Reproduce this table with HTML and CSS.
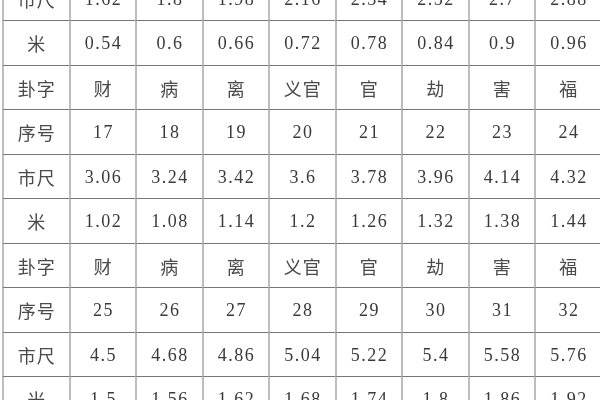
FILE: index.html
```html
<!DOCTYPE html>
<html lang="zh">
<head>
<meta charset="utf-8">
<link rel="stylesheet" href="styles.css">
</head>
<body>
<div class="sheet">
  <div class="grid">
    <div class="cell zh">市尺</div><div class="cell">1.62</div><div class="cell">1.8</div><div class="cell">1.98</div><div class="cell">2.16</div><div class="cell">2.34</div><div class="cell">2.52</div><div class="cell">2.7</div><div class="cell">2.88</div>
    <div class="cell zh">米</div><div class="cell">0.54</div><div class="cell">0.6</div><div class="cell">0.66</div><div class="cell">0.72</div><div class="cell">0.78</div><div class="cell">0.84</div><div class="cell">0.9</div><div class="cell">0.96</div>
    <div class="cell zh">卦字</div><div class="cell zh">财</div><div class="cell zh">病</div><div class="cell zh">离</div><div class="cell zh">义官</div><div class="cell zh">官</div><div class="cell zh">劫</div><div class="cell zh">害</div><div class="cell zh">福</div>
    <div class="cell zh">序号</div><div class="cell">17</div><div class="cell">18</div><div class="cell">19</div><div class="cell">20</div><div class="cell">21</div><div class="cell">22</div><div class="cell">23</div><div class="cell">24</div>
    <div class="cell zh">市尺</div><div class="cell">3.06</div><div class="cell">3.24</div><div class="cell">3.42</div><div class="cell">3.6</div><div class="cell">3.78</div><div class="cell">3.96</div><div class="cell">4.14</div><div class="cell">4.32</div>
    <div class="cell zh">米</div><div class="cell">1.02</div><div class="cell">1.08</div><div class="cell">1.14</div><div class="cell">1.2</div><div class="cell">1.26</div><div class="cell">1.32</div><div class="cell">1.38</div><div class="cell">1.44</div>
    <div class="cell zh">卦字</div><div class="cell zh">财</div><div class="cell zh">病</div><div class="cell zh">离</div><div class="cell zh">义官</div><div class="cell zh">官</div><div class="cell zh">劫</div><div class="cell zh">害</div><div class="cell zh">福</div>
    <div class="cell zh">序号</div><div class="cell">25</div><div class="cell">26</div><div class="cell">27</div><div class="cell">28</div><div class="cell">29</div><div class="cell">30</div><div class="cell">31</div><div class="cell">32</div>
    <div class="cell zh">市尺</div><div class="cell">4.5</div><div class="cell">4.68</div><div class="cell">4.86</div><div class="cell">5.04</div><div class="cell">5.22</div><div class="cell">5.4</div><div class="cell">5.58</div><div class="cell">5.76</div>
    <div class="cell zh">米</div><div class="cell">1.5</div><div class="cell">1.56</div><div class="cell">1.62</div><div class="cell">1.68</div><div class="cell">1.74</div><div class="cell">1.8</div><div class="cell">1.86</div><div class="cell">1.92</div>
  </div>
</div>
</body>
</html>
```
FILE: styles.css
```css
html, body {
  margin: 0;
  padding: 0;
  background: #fff;
}

.sheet {
  width: 600px;
  height: 400px;
  overflow: hidden;
  background: #fff;
}

.grid {
  display: grid;
  grid-template-columns: repeat(9, 66.5px);
  grid-auto-rows: 44.5px;
  margin-top: -23.5px;
  margin-left: 2px;
  filter: blur(0.35px);
}

.cell {
  box-sizing: border-box;
  border-left: 2px solid #bdbdbd;
  border-bottom: 1.5px solid #767676;
  display: flex;
  align-items: center;
  justify-content: center;
  padding-left: 1.5px;
  padding-top: 2px;
  font-family: "Liberation Serif", "Noto Sans CJK SC", serif;
  font-size: 18px;
  letter-spacing: 1.5px;
  color: #3a3a3a;
}

.cell.zh {
  font-family: "Noto Sans CJK SC", serif;
  font-size: 18px;
  font-weight: 400;
  letter-spacing: 1px;
  padding-left: 1px;
  padding-top: 1px;
  color: #4a4a4a;
}
```
